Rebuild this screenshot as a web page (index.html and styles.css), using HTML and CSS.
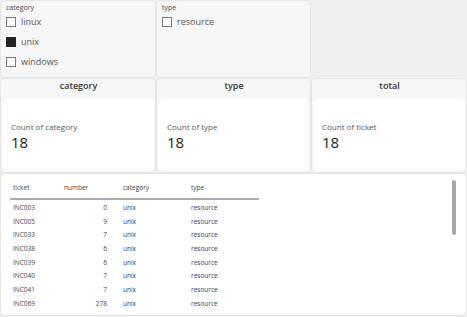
FILE: index.html
```html
<!DOCTYPE html>
<html lang="en">
<head>
    <meta charset="UTF-8">
    <title>Tickets</title>
    <link rel="stylesheet" href="styles.css">
</head>
<body>
    <div class="dash">
        <div class="row filters">
            <div class="panel">
                <div class="panel-label">category</div>
                <label class="check"><span class="box"></span>linux</label>
                <label class="check"><span class="box on"></span>unix</label>
                <label class="check"><span class="box"></span>windows</label>
            </div>
            <div class="panel">
                <div class="panel-label">type</div>
                <label class="check"><span class="box"></span>resource</label>
            </div>
            <div class="panel empty"></div>
        </div>

        <div class="row cards">
            <div class="panel card-wrap">
                <div class="card-title">category</div>
                <div class="card">
                    <div class="card-label">Count of category</div>
                    <div class="card-value">18</div>
                </div>
            </div>
            <div class="panel card-wrap">
                <div class="card-title">type</div>
                <div class="card">
                    <div class="card-label">Count of type</div>
                    <div class="card-value">18</div>
                </div>
            </div>
            <div class="panel card-wrap">
                <div class="card-title">total</div>
                <div class="card">
                    <div class="card-label">Count of ticket</div>
                    <div class="card-value">18</div>
                </div>
            </div>
        </div>

        <div class="table-panel">
            <table class="grid">
                <colgroup>
                    <col class="c-ticket">
                    <col class="c-number">
                    <col class="c-category">
                    <col class="c-type">
                </colgroup>
                <thead>
                    <tr><th>ticket</th><th>number</th><th class="cat-col">category</th><th class="type-col">type</th></tr>
                </thead>
                <tbody>
                    <tr><td>INC003</td><td class="num">0</td><td class="cat cat-col">unix</td><td class="cat type-col">resource</td></tr>
                    <tr><td>INC005</td><td class="num">9</td><td class="cat cat-col">unix</td><td class="cat type-col">resource</td></tr>
                    <tr><td>INC033</td><td class="num">7</td><td class="cat cat-col">unix</td><td class="cat type-col">resource</td></tr>
                    <tr><td>INC038</td><td class="num">6</td><td class="cat cat-col">unix</td><td class="cat type-col">resource</td></tr>
                    <tr><td>INC039</td><td class="num">6</td><td class="cat cat-col">unix</td><td class="cat type-col">resource</td></tr>
                    <tr><td>INC040</td><td class="num">7</td><td class="cat cat-col">unix</td><td class="cat type-col">resource</td></tr>
                    <tr><td>INC041</td><td class="num">7</td><td class="cat cat-col">unix</td><td class="cat type-col">resource</td></tr>
                    <tr><td>INC069</td><td class="num">278</td><td class="cat cat-col">unix</td><td class="cat type-col">resource</td></tr>
                </tbody>
            </table>
            <div class="scrollbar"></div>
        </div>
    </div>
</body>
</html>
```

FILE: styles.css
```css
body {
    margin: 0;
    padding: 0;
    background-color: #efefef;
    font-family: "Open Sans", "Noto Sans", Arial, sans-serif;
    color: #333;
}
.dash {
    width: 467px;
    height: 317px;
    padding: 1px;
    box-sizing: border-box;
}
.row {
    display: grid;
    grid-template-columns: 154px 153px 154px;
    column-gap: 2px;
    margin-bottom: 2px;
}
.panel {
    background: #f7f7f7;
    border-radius: 4px;
    box-shadow: 0 0 0 1px #e6e6e6;
}
.panel.empty {
    background: transparent;
    box-shadow: none;
}
.filters .panel {
    height: 76px;
    padding: 2px 5px;
    box-sizing: border-box;
}
.panel-label {
    font-size: 7px;
    line-height: 10px;
    color: #444;
    margin-bottom: 3px;
}
.check {
    display: flex;
    align-items: center;
    font-size: 9px;
    line-height: 12px;
    color: #555;
    height: 12px;
    margin-bottom: 8px;
}
.box {
    width: 8px;
    height: 8px;
    border: 1px solid #777;
    background: #fff;
    margin-right: 5px;
}
.box.on {
    background: #222;
    border-color: #222;
}
.card-wrap {
    height: 93px;
    padding: 0 1px 1px 2px;
    box-sizing: border-box;
    display: flex;
    flex-direction: column;
}
.card-title {
    text-align: center;
    font-size: 9px;
    font-weight: 600;
    line-height: 14px;
    height: 20px;
    color: #333;
}
.card {
    flex: 1;
    background: #fff;
    border-radius: 4px;
    padding: 22px 8px 0;
}
.card-label {
    font-size: 8px;
    line-height: 12px;
    color: #555;
}
.card-value {
    font-size: 15px;
    font-weight: 500;
    line-height: 18px;
    color: #222;
}
.table-panel {
    position: relative;
    background: #fff;
    border-radius: 4px;
    height: 141px;
    box-shadow: 0 0 0 1px #e4e4e4;
    padding: 5px 9px 0;
    box-sizing: border-box;
    overflow: hidden;
}
.grid {
    border-collapse: collapse;
    table-layout: fixed;
    width: 249px;
    font-size: 6.5px;
    color: #444;
}
.c-ticket { width: 51px; }
.c-number { width: 51px; }
.c-category { width: 69px; }
.c-type { width: 78px; }
.grid th {
    font-weight: normal;
    text-align: left;
    vertical-align: top;
    height: 15px;
    line-height: 9px;
    padding: 4px 5px 0 3px;
    border-bottom: 2px solid #aaa;
}
.grid td {
    height: 12.7px;
    padding: 1px 5px 0 3px;
}
.grid .cat-col {
    padding-left: 11px;
}
.grid .type-col {
    padding-left: 10px;
}
.grid td.num {
    text-align: right;
}
.grid td.cat {
    color: #2b3d70;
}
.scrollbar {
    position: absolute;
    right: 10px;
    top: 6px;
    width: 4px;
    height: 55px;
    background: #a8a8a8;
    border-radius: 2px;
}
```
